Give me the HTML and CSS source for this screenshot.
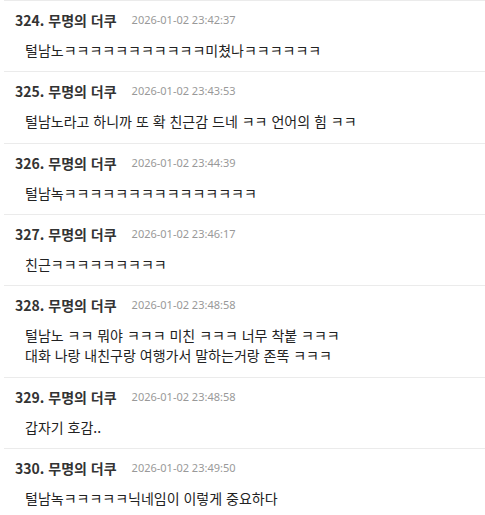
FILE: index.html
```html
<!DOCTYPE html>
<html lang="ko">
<head>
  <meta charset="UTF-8" />
  <meta name="viewport" content="width=device-width, initial-scale=1.0" />
  <title>댓글</title>
  <link rel="stylesheet" href="styles.css">
</head>
<body>
  <ul class="comments">
    <li class="comment">
      <div class="comment-head"><span class="author">324. 무명의 더쿠</span><span class="date">2026-01-02 23:42:37</span></div>
      <p class="comment-body">털남노ㅋㅋㅋㅋㅋㅋㅋㅋㅋㅋㅋ미쳤나ㅋㅋㅋㅋㅋㅋ</p>
    </li>
    <li class="comment">
      <div class="comment-head"><span class="author">325. 무명의 더쿠</span><span class="date">2026-01-02 23:43:53</span></div>
      <p class="comment-body">털남노라고 하니까 또 확 친근감 드네 ㅋㅋ 언어의 힘 ㅋㅋ</p>
    </li>
    <li class="comment">
      <div class="comment-head"><span class="author">326. 무명의 더쿠</span><span class="date">2026-01-02 23:44:39</span></div>
      <p class="comment-body">털남녹ㅋㅋㅋㅋㅋㅋㅋㅋㅋㅋㅋㅋㅋㅋㅋ</p>
    </li>
    <li class="comment">
      <div class="comment-head"><span class="author">327. 무명의 더쿠</span><span class="date">2026-01-02 23:46:17</span></div>
      <p class="comment-body">친근ㅋㅋㅋㅋㅋㅋㅋㅋㅋ</p>
    </li>
    <li class="comment">
      <div class="comment-head"><span class="author">328. 무명의 더쿠</span><span class="date">2026-01-02 23:48:58</span></div>
      <p class="comment-body">털남노 ㅋㅋ 뭐야 ㅋㅋㅋ 미친 ㅋㅋㅋ 너무 착붙 ㅋㅋㅋ<br>대화 나랑 내친구랑 여행가서 말하는거랑 존똑 ㅋㅋㅋ</p>
    </li>
    <li class="comment">
      <div class="comment-head"><span class="author">329. 무명의 더쿠</span><span class="date">2026-01-02 23:48:58</span></div>
      <p class="comment-body">갑자기 호감..</p>
    </li>
    <li class="comment">
      <div class="comment-head"><span class="author">330. 무명의 더쿠</span><span class="date">2026-01-02 23:49:50</span></div>
      <p class="comment-body">털남녹ㅋㅋㅋㅋㅋ닉네임이 이렇게 중요하다</p>
    </li>
  </ul>
</body>
</html>
```

FILE: styles.css
```css
body {
  margin: 0;
  padding: 0;
  background: #fff;
  font-family: "Noto Sans CJK KR", sans-serif;
  color: #333;
  overflow: hidden;
}

.comments {
  list-style: none;
  margin: 0 0 0 4px;
  padding: 0;
}

.comment {
  border-top: 1px solid #ebebeb;
  padding: 9px 0 11.33px 11px;
}

.comment-head {
  display: flex;
  align-items: center;
  gap: 15px;
  height: 20px;
}

.author {
  font-size: 14px;
  font-weight: bold;
  line-height: 20px;
  color: #333;
}

.date {
  font-family: "Noto Sans", sans-serif;
  font-size: 11px;
  line-height: 20px;
  color: #999;
}

.comment-body {
  margin: 10px 0 0 10px;
  font-size: 14px;
  line-height: 20px;
  color: #222;
}
```
